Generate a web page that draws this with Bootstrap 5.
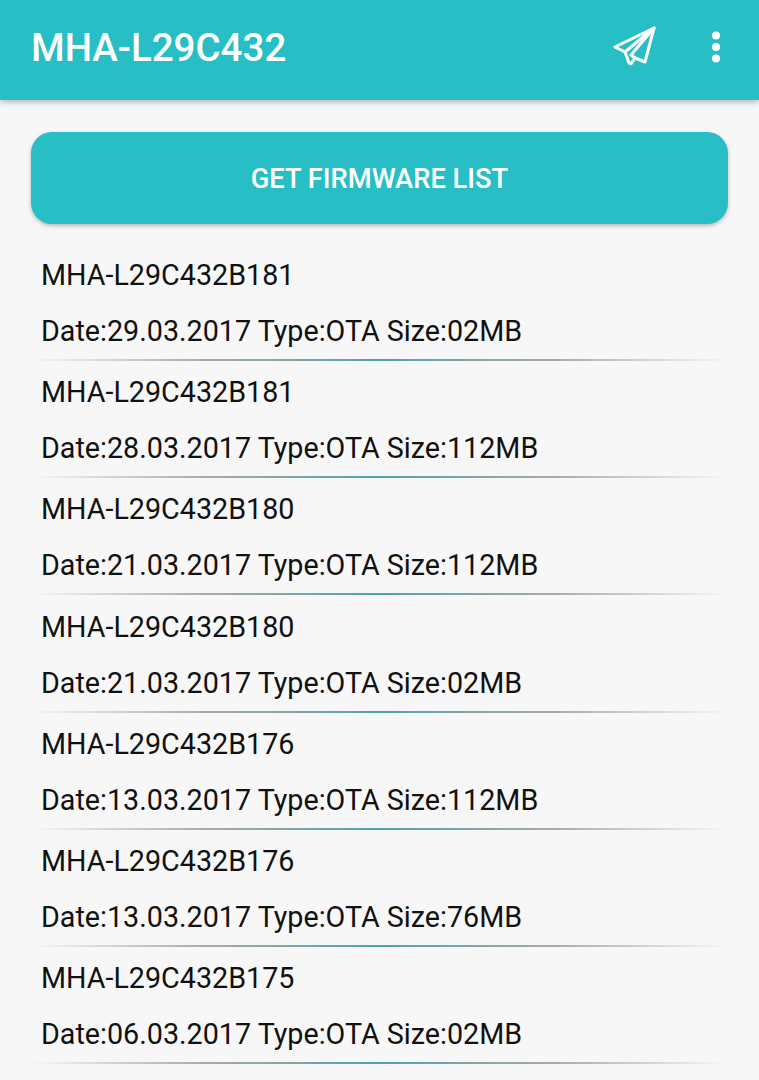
<!doctype html>
<html lang="en">
<head>
<meta charset="utf-8">
<title>Firmware list</title>
<link href="https://cdn.jsdelivr.net/npm/bootstrap@5.3.0/dist/css/bootstrap.min.css" rel="stylesheet">
<style>
html,body{height:100%;}
body{background:#f7f7f7;font-family:Roboto,"Liberation Sans",sans-serif;color:#111;overflow:hidden;}
.app-bar{height:100px;background:#27bfc5;box-shadow:0 2px 6px rgba(0,0,0,.28);padding:0 37px 4px 31px;}
.app-title{font-size:38.5px;font-weight:500;color:#fff;line-height:1;margin:0;}
.send-icon{width:46px;height:46px;margin:0 52px 3px 0;}
.dots-icon{width:12px;height:34px;margin-bottom:3px;}
.main-btn{display:block;width:697px;height:92px;margin:32px 0 0 31px;background:#27bfc5;border:0;border-radius:21px;color:#fff;font-size:27.3px;font-weight:500;padding-top:8px;box-shadow:0 2px 4px rgba(0,0,0,.25);}
.main-btn:hover,.main-btn:active{background:#27bfc5!important;color:#fff!important;}
.fw-list{margin:21px 0 0 31px;width:697px;}
.fw-item{height:117.2px;padding:0 0 0 10px;position:relative;}
.fw-name,.fw-meta{font-size:28.7px;line-height:40px;margin:0;white-space:nowrap;}
.fw-name{padding-top:10px;}
.fw-meta{padding-top:16px;}
.fw-rule{position:absolute;left:0;right:0;top:114px;height:2px;background:linear-gradient(90deg,rgba(120,120,120,0),#a9a9a9 25%,#4fa3a5 50%,#a9a9a9 75%,rgba(120,120,120,0));}
</style>
</head>
<body>
<header class="app-bar d-flex align-items-center">
  <h1 class="app-title flex-grow-1">MHA-L29C432</h1>
  <svg class="send-icon" viewBox="0 0 46 46" fill="none" stroke="#fff" stroke-width="3" stroke-linejoin="round" stroke-linecap="round" aria-hidden="true">
    <path d="M42 4 3 23l10 5 4 11 2 1 4-6 10 4z"/>
    <path d="M42 4 13 28"/>
    <path d="M42 4 19 31l4 3"/>
  </svg>
  <svg class="dots-icon" viewBox="0 0 12 34" fill="#fff" aria-hidden="true">
    <circle cx="6" cy="5.5" r="4"/><circle cx="6" cy="17" r="4"/><circle cx="6" cy="28.5" r="4"/>
  </svg>
</header>
<button type="button" class="btn main-btn">GET FIRMWARE LIST</button>
<div class="fw-list">
  <div class="fw-item"><p class="fw-name">MHA-L29C432B181</p><p class="fw-meta">Date:29.03.2017 Type:OTA Size:02MB</p><div class="fw-rule"></div></div>
  <div class="fw-item"><p class="fw-name">MHA-L29C432B181</p><p class="fw-meta">Date:28.03.2017 Type:OTA Size:112MB</p><div class="fw-rule"></div></div>
  <div class="fw-item"><p class="fw-name">MHA-L29C432B180</p><p class="fw-meta">Date:21.03.2017 Type:OTA Size:112MB</p><div class="fw-rule"></div></div>
  <div class="fw-item"><p class="fw-name">MHA-L29C432B180</p><p class="fw-meta">Date:21.03.2017 Type:OTA Size:02MB</p><div class="fw-rule"></div></div>
  <div class="fw-item"><p class="fw-name">MHA-L29C432B176</p><p class="fw-meta">Date:13.03.2017 Type:OTA Size:112MB</p><div class="fw-rule"></div></div>
  <div class="fw-item"><p class="fw-name">MHA-L29C432B176</p><p class="fw-meta">Date:13.03.2017 Type:OTA Size:76MB</p><div class="fw-rule"></div></div>
  <div class="fw-item"><p class="fw-name">MHA-L29C432B175</p><p class="fw-meta">Date:06.03.2017 Type:OTA Size:02MB</p><div class="fw-rule"></div></div>
</div>
<script src="https://cdn.jsdelivr.net/npm/bootstrap@5.3.0/dist/js/bootstrap.bundle.min.js"></script>
</body>
</html>
